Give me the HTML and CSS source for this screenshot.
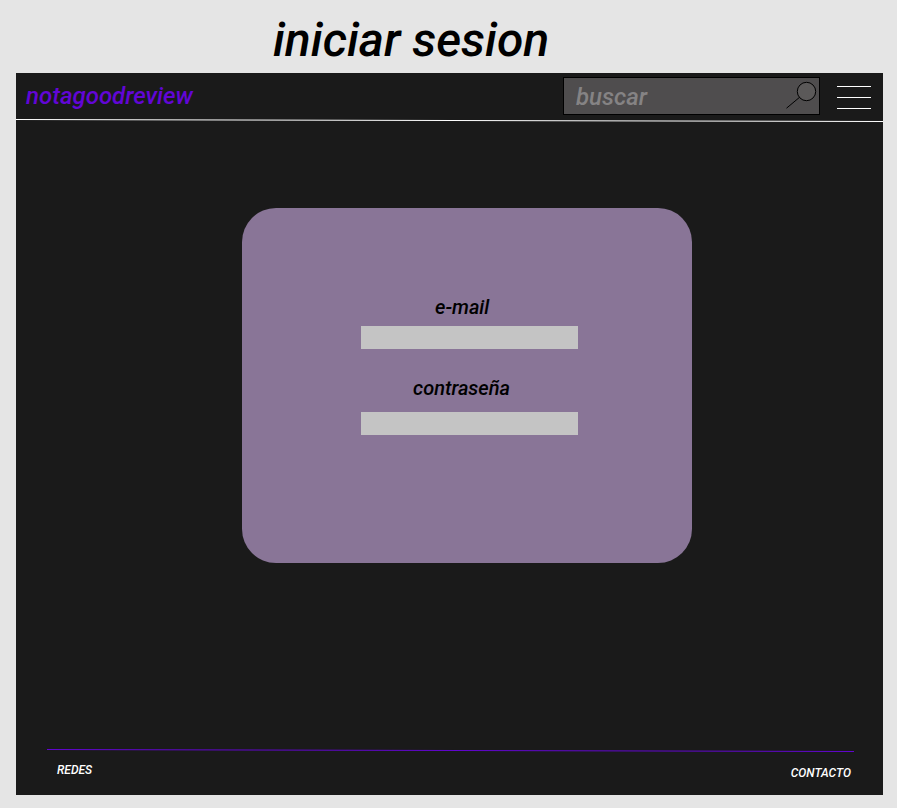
FILE: index.html
```html
<!DOCTYPE html>
<html lang="es">
<head>
<meta charset="utf-8">
<title>iniciar sesion</title>
<link rel="stylesheet" href="styles.css">
</head>
<body>
<h1 class="title">iniciar sesion</h1>
<div class="screen">
  <header class="topbar">
    <div class="logo">notagoodreview</div>
    <div class="search">
      <span class="search-text">buscar</span>
      <svg class="search-icon" width="32" height="30" viewBox="0 0 32 30" fill="none" stroke="#000">
        <circle cx="20.5" cy="10.5" r="9.2" fill="#5b5959"/>
        <path d="M13.3 16.5L.5 27.2"/>
      </svg>
    </div>
    <div class="menu"><i></i><i></i><i></i></div>
  </header>
  <svg class="rule" width="867" height="4" viewBox="0 0 867 4"><path d="M0 1.5L867 3.5" stroke="#fff"/></svg>
  <main class="content">
    <form class="card">
      <label class="label label-mail" for="mail">e-mail</label>
      <input class="field" id="mail" type="text">
      <label class="label label-pass" for="pass">contraseña</label>
      <input class="field" id="pass" type="password">
    </form>
  </main>
  <footer class="footer">
    <svg class="rule" width="807" height="4" viewBox="0 0 807 4"><path d="M0 .5L807 2.5" stroke="#6206cf"/></svg>
    <div class="links"><span class="redes">REDES</span><span class="contacto">CONTACTO</span></div>
  </footer>
</div>
</body>
</html>
```
FILE: styles.css
```css
* { box-sizing: border-box; }
body {
  margin: 0;
  height: 808px;
  padding: 0 14px 13px 16px;
  background: #e5e5e5;
  font-family: Roboto, "Liberation Sans", sans-serif;
  font-style: italic;
  font-weight: 500;
  overflow: hidden;
}
.title {
  margin: 0;
  height: 73px;
  padding: 12px 0 0 257px;
  font-size: 48px;
  line-height: 56px;
  font-weight: 500;
}
.screen {
  display: flex;
  flex-direction: column;
  width: 867px;
  height: 722px;
  background: #1a1a1a;
}
.topbar {
  display: flex;
  height: 45px;
  padding: 4px 12px 0 10px;
}
.logo {
  flex: 1;
  padding-top: 5px;
  color: #6206d6;
  font-size: 24px;
  line-height: 28px;
}
.search {
  display: flex;
  justify-content: space-between;
  width: 257px;
  height: 38px;
  padding: 3px 1px 0 12px;
  border: 1px solid #000;
  background: #4f4d4e;
}
.search-text {
  padding-top: 2px;
  color: #858384;
  font-size: 24px;
  line-height: 28px;
}
.menu {
  display: flex;
  flex-direction: column;
  gap: 10px;
  width: 34px;
  margin: 9px 0 0 17px;
}
.menu i { height: 1px; background: #fff; }
.rule { display: block; flex: none; }
.content { flex: 1; padding: 86px 0 0 226px; }
.card {
  display: flex;
  flex-direction: column;
  width: 450px;
  height: 355px;
  padding: 88px 0 0 119px;
  border-radius: 34px;
  background: #897597;
}
.label { font-size: 20px; line-height: 23px; }
.label-mail { padding-left: 74px; margin-bottom: 7px; }
.label-pass { padding-left: 52px; margin: 28px 0 12px; }
.field {
  width: 217px;
  height: 23px;
  padding: 0 6px;
  border: 0;
  border-radius: 0;
  background: #c4c4c4;
}
.footer { height: 46px; padding: 0 29px 0 31px; }
.links {
  display: flex;
  justify-content: space-between;
  padding: 10px 3px 0 10px;
  color: #fff;
  font-size: 12px;
  line-height: 14px;
}
.contacto { margin-top: 3px; }
```
